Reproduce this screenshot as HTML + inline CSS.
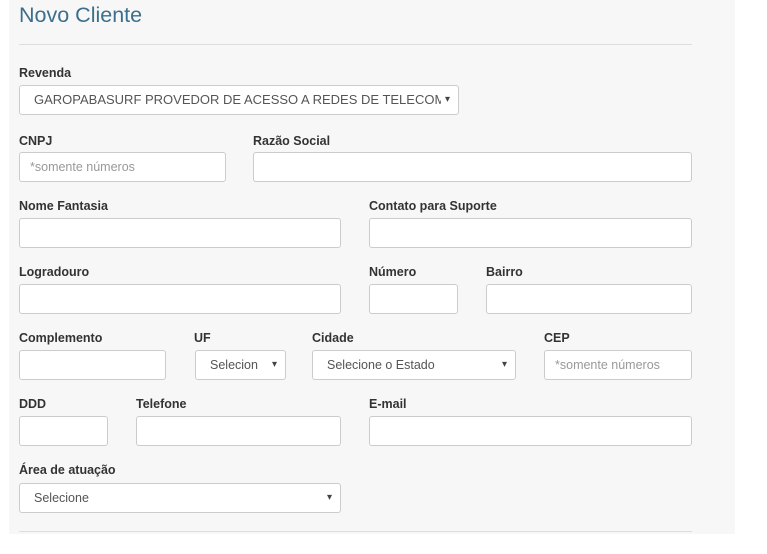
<!DOCTYPE html>
<html><head><meta charset="utf-8"><style>
body{margin:0;width:767px;height:554px;background:#fff;font-family:"Liberation Sans",Arial,sans-serif;position:relative;overflow:hidden}
.panel{position:absolute;left:9px;top:0;width:726px;height:534px;background:#f7f7f7}
h1{position:absolute;left:19px;top:3px;margin:0;font-weight:normal;font-size:21.5px;color:#3b6f8d}
.hr{position:absolute;left:19px;width:673px;height:1px;background:#ddd}
.l{position:absolute;font-size:12.5px;font-weight:bold;color:#333}
.i{position:absolute;height:28px;background:#fff;border:1px solid #ccc;border-radius:3px;box-sizing:content-box;font-size:12.5px;color:#555;line-height:28px;overflow:hidden;white-space:nowrap}
.ph{color:#999;padding-left:10px}
.s{padding-left:14px}
.s:after{content:"▾";position:absolute;right:8px;top:0;font-size:10px;color:#444;background:#fff;padding-left:4px}
</style></head><body>
<div class="panel"></div>
<h1>Novo Cliente</h1>
<div class="hr" style="top:44px"></div>
<div class="l" style="left:19px;top:66px">Revenda</div>
<div class="i s" style="left:19px;top:85px;width:424px;font-size:13px">GAROPABASURF PROVEDOR DE ACESSO A REDES DE TELECOM</div>
<div class="l" style="left:19px;top:134px">CNPJ</div>
<div class="i ph" style="left:19px;top:152px;width:195px">*somente números</div>
<div class="l" style="left:253px;top:134px">Razão Social</div>
<div class="i" style="left:253px;top:152px;width:437px"></div>
<div class="l" style="left:19px;top:199px">Nome Fantasia</div>
<div class="i" style="left:19px;top:218px;width:320px"></div>
<div class="l" style="left:369px;top:199px">Contato para Suporte</div>
<div class="i" style="left:369px;top:218px;width:321px"></div>
<div class="l" style="left:19px;top:265px">Logradouro</div>
<div class="i" style="left:19px;top:284px;width:320px"></div>
<div class="l" style="left:369px;top:265px">Número</div>
<div class="i" style="left:369px;top:284px;width:87px"></div>
<div class="l" style="left:486px;top:265px">Bairro</div>
<div class="i" style="left:486px;top:284px;width:204px"></div>
<div class="l" style="left:19px;top:331px">Complemento</div>
<div class="i" style="left:19px;top:350px;width:145px"></div>
<div class="l" style="left:194px;top:331px">UF</div>
<div class="i s" style="left:195px;top:350px;width:75px">Selecion</div>
<div class="l" style="left:312px;top:331px">Cidade</div>
<div class="i s" style="left:312px;top:350px;width:188px">Selecione o Estado</div>
<div class="l" style="left:544px;top:331px">CEP</div>
<div class="i ph" style="left:544px;top:350px;width:136px">*somente números</div>
<div class="l" style="left:19px;top:397px">DDD</div>
<div class="i" style="left:19px;top:416px;width:87px"></div>
<div class="l" style="left:136px;top:397px">Telefone</div>
<div class="i" style="left:136px;top:416px;width:203px"></div>
<div class="l" style="left:369px;top:397px">E-mail</div>
<div class="i" style="left:369px;top:416px;width:321px"></div>
<div class="l" style="left:19px;top:463px">Área de atuação</div>
<div class="i s" style="left:19px;top:483px;width:306px">Selecione</div>
<div class="hr" style="top:531px"></div>
</body></html>
